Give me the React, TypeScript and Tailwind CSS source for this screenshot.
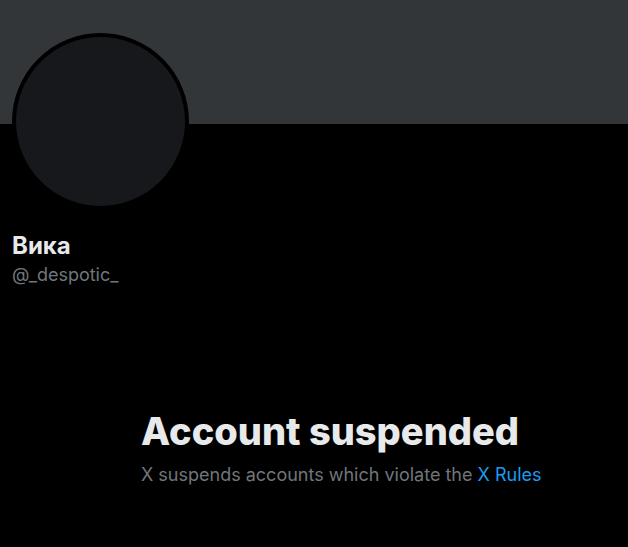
const App = () => {
  return (
    <div className="min-h-[547px] w-[628px] bg-black font-['Inter',sans-serif] overflow-hidden">
      <div className="h-[124px] bg-[#333639]" />
      <div className="px-3">
        <div className="-mt-[91px] w-[177px] h-[177px] rounded-full border-4 border-black bg-[#16181c]" />
        <div className="mt-[22px] text-[24px] leading-[28px] font-bold text-[#e7e9ea]">Вика</div>
        <div className="mt-[3px] text-[18px] leading-[24px] text-[#71767b]">@_despotic_</div>
      </div>
      <div className="ml-[141px] mt-[122px]">
        <h1 className="text-[38px] leading-[44px] font-extrabold text-[#e7e9ea]">Account suspended</h1>
        <p className="mt-[10px] text-[18px] leading-[24px] text-[#71767b]">
          X suspends accounts which violate the <span className="text-[#1d9bf0]">X Rules</span>
        </p>
      </div>
    </div>
  );
};

export default App;
